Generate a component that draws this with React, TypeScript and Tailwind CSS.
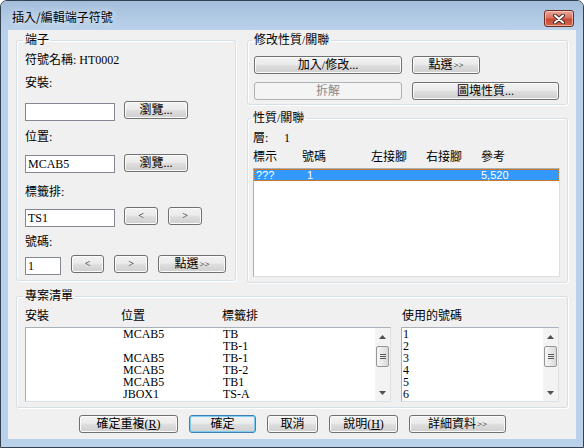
import type { ReactNode } from 'react';

const cx = (...c: (string | false | undefined)[]) => c.filter(Boolean).join(' ');

const Btn = ({
  className,
  children,
  kind = 'normal',
}: {
  className: string;
  children: ReactNode;
  kind?: 'normal' | 'default' | 'disabled';
}) => (
  <button
    type="button"
    className={cx(
      'flex h-[18px] shrink-0 items-center justify-center rounded-[3px] border text-[12px] leading-[14px]',
      kind === 'normal' &&
        'border-[#707070] bg-[linear-gradient(#f2f2f2,#ebebeb_45%,#dddddd_55%,#cfcfcf)] text-black shadow-[inset_0_0_0_1px_#fbfbfb]',
      kind === 'default' &&
        'border-[#3c7fb1] bg-[linear-gradient(#f2f2f2,#ebebeb_45%,#dddddd_55%,#cfcfcf)] text-black shadow-[inset_0_0_0_1px_#7fcdf2]',
      kind === 'disabled' && 'border-[#adb2b5] bg-[#f4f4f4] text-[#8a8a8a]',
      className
    )}
  >
    {children}
  </button>
);

const Arrows = () => <span className="ml-[1px] text-[9px] leading-[14px]">&gt;&gt;</span>;

const Group = ({
  title,
  className,
  children,
}: {
  title: string;
  className: string;
  children: ReactNode;
}) => (
  <fieldset
    className={cx(
      'rounded-[3px] border border-[#d5dfe5] shadow-[inset_1px_1px_0_#ffffff,1px_1px_0_#ffffff]',
      className
    )}
  >
    <legend className="ml-[-2px] px-[2px] text-[12px] leading-[14px]">{title}</legend>
    {children}
  </fieldset>
);

const TextBox = ({ className, value }: { className: string; value: string }) => (
  <div
    className={cx(
      'h-[18px] shrink-0 border border-[#828790] bg-white pl-[2px] text-[12px] leading-[16px]',
      className
    )}
  >
    {value}
  </div>
);

const ScrollBar = () => (
  <div className="flex h-full w-[15px] shrink-0 flex-col items-center bg-[#f3f3f3]">
    <div className="flex h-[17px] w-full items-center justify-center">
      <svg width="7" height="4" viewBox="0 0 7 4">
        <path d="M0 4 L3.5 0 L7 4 Z" fill="#4f4f4f" />
      </svg>
    </div>
    <div className="mt-[1px] flex h-[21px] w-[13px] flex-col items-center justify-center gap-[1px] rounded-[2px] border border-[#969696] bg-[linear-gradient(90deg,#f6f6f6,#e9e9e9_50%,#d9d9d9)]">
      <div className="h-[1px] w-[6px] bg-[#5c5c5c]" />
      <div className="h-[1px] w-[6px] bg-[#5c5c5c]" />
      <div className="h-[1px] w-[6px] bg-[#5c5c5c]" />
    </div>
    <div className="flex-1" />
    <div className="flex h-[17px] w-full items-center justify-center">
      <svg width="7" height="4" viewBox="0 0 7 4">
        <path d="M0 0 L3.5 4 L7 0 Z" fill="#4f4f4f" />
      </svg>
    </div>
  </div>
);

const projectRows = [
  ['MCAB5', 'TB'],
  ['', 'TB-1'],
  ['MCAB5', 'TB-1'],
  ['MCAB5', 'TB-2'],
  ['MCAB5', 'TB1'],
  ['JBOX1', 'TS-A'],
];

export default function App() {
  return (
    <div className="h-[448px] w-[584px] overflow-hidden rounded-t-[7px] border border-[#34414e] bg-[#b9d1ea] font-['Liberation_Serif','Noto_Sans_CJK_TC',serif] text-black">
      {/* title bar */}
      <div className="flex h-[29px] items-start justify-between bg-[linear-gradient(#a3bedb,#b4cce6_70%,#b9d1ea)] pl-[11px] pr-[9px]">
        <div className="pt-[9px] font-['Noto_Sans_CJK_TC',sans-serif] text-[12px] leading-[14px] [text-shadow:0_0_6px_#ffffff]">
          插入/編輯端子符號
        </div>
        <div className="mt-[9px] flex h-[17px] w-[30px] items-center justify-center rounded-[3px] border border-[#6e2b22] bg-[linear-gradient(#eaa99b,#d9735f_45%,#c74a33_55%,#cf6a4f)] shadow-[inset_0_0_0_1px_rgba(255,220,210,0.6)]">
          <svg width="12" height="10" viewBox="0 0 12 10">
            <path d="M2 1.5 L10 8.5 M10 1.5 L2 8.5" stroke="#4a2a26" strokeWidth="4" strokeLinecap="round" />
            <path d="M2 1.5 L10 8.5 M10 1.5 L2 8.5" stroke="#ffffff" strokeWidth="2" strokeLinecap="round" />
          </svg>
        </div>
      </div>

      {/* client area */}
      <div className="mx-[7px] flex h-[409px] w-[568px] flex-col bg-[#f0f0f0] pl-[8px] pt-[3px]">
        <div className="flex items-start">
          {/* 端子 */}
          <Group title="端子" className="w-[220px] pb-[5px] pl-[8px] pr-[8px]">
            <div className="mt-[6px] text-[12px] leading-[14px]">符號名稱: HT0002</div>
            <div className="mt-[9px] text-[12px] leading-[14px]">安裝:</div>
            <div className="mt-[11px] flex items-start">
              <TextBox className="mt-[2px] w-[90px]" value="" />
              <Btn className="ml-[9px] w-[64px]">瀏覽...</Btn>
            </div>
            <div className="mt-[9px] text-[12px] leading-[14px]">位置:</div>
            <div className="mt-[10px] flex items-start">
              <TextBox className="mt-[1px] w-[90px]" value="MCAB5" />
              <Btn className="ml-[9px] w-[64px]">瀏覽...</Btn>
            </div>
            <div className="mt-[12px] text-[12px] leading-[14px]">標籤排:</div>
            <div className="mt-[8px] flex items-start">
              <TextBox className="mt-[2px] w-[90px]" value="TS1" />
              <Btn className="ml-[9px] w-[34px]">
                <span className="text-[10px]">&lt;</span>
              </Btn>
              <Btn className="ml-[10px] w-[34px]">
                <span className="text-[10px]">&gt;</span>
              </Btn>
            </div>
            <div className="mt-[8px] text-[12px] leading-[14px]">號碼:</div>
            <div className="mt-[6px] flex items-start">
              <TextBox className="mt-[2px] w-[36px]" value="1" />
              <Btn className="ml-[10px] w-[33px]">
                <span className="text-[10px]">&lt;</span>
              </Btn>
              <Btn className="ml-[10px] w-[34px]">
                <span className="text-[10px]">&gt;</span>
              </Btn>
              <Btn className="ml-[10px] w-[68px]">
                點選
                <Arrows />
              </Btn>
            </div>
          </Group>

          {/* right column */}
          <div className="ml-[11px] flex w-[321px] flex-col">
            <Group title="修改性質/關聯" className="w-[321px] pb-[4px] pl-[6px]">
              <div className="mt-[9px] flex">
                <Btn className="w-[148px]">加入/修改...</Btn>
                <Btn className="ml-[10px] w-[68px]">
                  點選
                  <Arrows />
                </Btn>
              </div>
              <div className="mt-[8px] flex">
                <Btn kind="disabled" className="w-[148px]">
                  拆解
                </Btn>
                <Btn className="ml-[10px] w-[147px]">圖塊性質...</Btn>
              </div>
            </Group>

            <Group title="性質/關聯" className="mt-[6px] w-[321px] pb-[5px] pl-[5px]">
              <div className="mt-[6px] flex text-[12px] leading-[14px]">
                <span className="w-[31px]">層:</span>
                <span>1</span>
              </div>
              <div className="mt-[5px] flex text-[12px] leading-[14px]">
                <span className="w-[49px]">標示</span>
                <span className="w-[69px]">號碼</span>
                <span className="w-[55px]">左接腳</span>
                <span className="w-[55px]">右接腳</span>
                <span>參考</span>
              </div>
              <div className="mt-[4px] h-[109px] w-[307px] border border-[#a9b0b8] border-b-[#dcdfe3] border-r-[#dcdfe3] bg-white">
                <div className="flex h-[12px] border border-dotted border-[#c8782a] bg-[#3399ff] font-['Liberation_Sans',sans-serif] text-[11px] leading-[10px] text-white">
                  <span className="w-[52px] pl-[1px]">???</span>
                  <span className="w-[174px]">1</span>
                  <span>5,520</span>
                </div>
              </div>
            </Group>
          </div>
        </div>

        {/* 專案清單 */}
        <Group title="專案清單" className="mt-[6px] w-[552px] pb-[5px] pl-[8px]">
          <div className="mt-[6px] flex">
            <div className="flex w-[366px] flex-col">
              <div className="flex text-[12px] leading-[14px]">
                <span className="w-[96px]">安裝</span>
                <span className="w-[101px]">位置</span>
                <span>標籤排</span>
              </div>
              <div className="mt-[4px] flex h-[75px] border border-[#a9b0b8] border-b-[#dcdfe3] border-r-[#dcdfe3] bg-white">
                <div className="flex flex-1 flex-col text-[12px] leading-[12px]">
                  {projectRows.map((r, i) => (
                    <div key={i} className="flex h-[12px]">
                      <span className="w-[97px]" />
                      <span className="w-[100px]">{r[0]}</span>
                      <span>{r[1]}</span>
                    </div>
                  ))}
                </div>
                <ScrollBar />
              </div>
            </div>
            <div className="ml-[10px] flex w-[158px] flex-col">
              <div className="pl-[1px] text-[12px] leading-[14px]">使用的號碼</div>
              <div className="mt-[4px] flex h-[75px] border border-[#a9b0b8] border-b-[#dcdfe3] border-r-[#dcdfe3] bg-white">
                <div className="flex flex-1 flex-col pl-[1px] text-[12px] leading-[12px]">
                  {['1', '2', '3', '4', '5', '6'].map((n) => (
                    <div key={n} className="h-[12px]">
                      {n}
                    </div>
                  ))}
                </div>
                <ScrollBar />
              </div>
            </div>
          </div>
        </Group>

        {/* buttons */}
        <div className="ml-[63px] mt-[7px] flex gap-[11px]">
          <Btn className="w-[99px]">
            確定重複(<u>R</u>)
          </Btn>
          <Btn kind="default" className="w-[67px]">
            確定
          </Btn>
          <Btn className="w-[51px]">取消</Btn>
          <Btn className="w-[69px]">
            說明(<u>H</u>)
          </Btn>
          <Btn className="w-[97px]">
            詳細資料
            <Arrows />
          </Btn>
        </div>
      </div>
    </div>
  );
}
